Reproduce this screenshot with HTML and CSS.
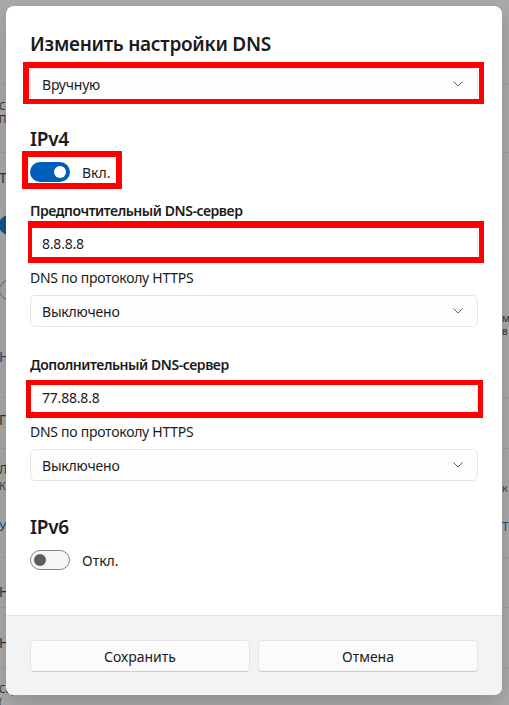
FILE: index.html
```html
<!DOCTYPE html>
<html lang="ru">
<head>
    <meta charset="UTF-8">
    <meta name="viewport" content="width=device-width, initial-scale=1.0">
    <title>Изменить настройки DNS</title>
    <link rel="stylesheet" href="styles.css">
</head>
<body>
    <!-- settings page behind the dialog (dimmed) -->
    <div class="backdrop">
        <div class="bg-row r0"></div>
        <div class="bg-row r1">
            <div class="bg-left">
                <div class="bg-line">Сеть</div>
                <div class="bg-line">Про</div>
            </div>
        </div>
        <div class="bg-row r2">
            <div class="bg-left">
                <div class="bg-text">Тип</div>
                <div class="bg-toggle on"></div>
                <div class="bg-toggle off"></div>
                <div class="bg-text link l2">Нас</div>
            </div>
            <div class="bg-right">
                <div class="bg-line">м</div>
                <div class="bg-line">в</div>
            </div>
        </div>
        <div class="bg-row r3">
            <div class="bg-left"><div class="bg-text">Гб</div></div>
        </div>
        <div class="bg-row r4">
            <div class="bg-left">
                <div class="bg-text">Лим</div>
                <div class="bg-text small">Ког</div>
                <div class="bg-text link l4">Уст</div>
            </div>
            <div class="bg-right">
                <div class="bg-text small">к</div>
                <div class="bg-text link l4r">Т</div>
            </div>
        </div>
        <div class="bg-row r5">
            <div class="bg-left"><div class="bg-text">Наз</div></div>
        </div>
        <div class="bg-row r6">
            <div class="bg-left"><div class="bg-text">Наз</div></div>
        </div>
        <div class="bg-row r7">
            <div class="bg-left">
                <div class="bg-line">Сер</div>
                <div class="bg-line">(</div>
            </div>
        </div>
    </div>

    <div class="dialog">
        <div class="dialog-body">
            <h1 class="dialog-title">Изменить настройки DNS</h1>

            <div class="mark mark-mode">
                <div class="select">
                    <span>Вручную</span>
                    <svg class="chevron" width="10" height="6" viewBox="0 0 10 6"><path d="M0.5 0.5 L5 5 L9.5 0.5" fill="none" stroke="#5f5f5f" stroke-width="1"/></svg>
                </div>
            </div>

            <h2 class="section-title">IPv4</h2>
            <div class="toggle-row">
                <div class="mark mark-toggle">
                    <div class="toggle on"><div class="knob"></div></div>
                    <span>Вкл.</span>
                </div>
            </div>

            <div class="field-label">Предпочтительный DNS-сервер</div>
            <div class="mark mark-dns1">
                <div class="input">8.8.8.8</div>
            </div>
            <div class="sub-label">DNS по протоколу HTTPS</div>
            <div class="select">
                <span>Выключено</span>
                <svg class="chevron" width="10" height="6" viewBox="0 0 10 6"><path d="M0.5 0.5 L5 5 L9.5 0.5" fill="none" stroke="#5f5f5f" stroke-width="1"/></svg>
            </div>

            <div class="field-label second">Дополнительный DNS-сервер</div>
            <div class="mark mark-dns2">
                <div class="input">77.88.8.8</div>
            </div>
            <div class="sub-label">DNS по протоколу HTTPS</div>
            <div class="select">
                <span>Выключено</span>
                <svg class="chevron" width="10" height="6" viewBox="0 0 10 6"><path d="M0.5 0.5 L5 5 L9.5 0.5" fill="none" stroke="#5f5f5f" stroke-width="1"/></svg>
            </div>

            <h2 class="section-title ipv6">IPv6</h2>
            <div class="toggle-row">
                <div class="switch">
                    <div class="toggle off"><div class="knob"></div></div>
                    <span>Откл.</span>
                </div>
            </div>
        </div>

        <div class="dialog-footer">
            <button type="button" class="btn">Сохранить</button>
            <button type="button" class="btn">Отмена</button>
        </div>
    </div>
</body>
</html>
```

FILE: styles.css
```css
* {
    box-sizing: border-box;
}

body {
    margin: 0;
    width: 509px;
    height: 705px;
    overflow: hidden;
    position: relative;
    font-family: "Noto Sans", sans-serif;
    background-color: #ababab;
    color: #1b1b1b;
}

/* ---------- dimmed page behind ---------- */

.backdrop {
    height: 705px;
    overflow: hidden;
    color: #333;
    font-size: 14px;
}

.bg-row {
    display: flex;
    border-bottom: 1px solid #a0a0a0;
}

.bg-left {
    flex: 1;
    margin-left: -1px;
    white-space: nowrap;
}

.bg-right {
    width: 7px;
    white-space: nowrap;
}

.bg-line {
    font-size: 10px;
    line-height: 13px;
}

.bg-text {
    line-height: 16px;
}

.small {
    font-size: 11px;
    color: #444;
}

.link {
    color: #1c4b7d;
}

.bg-toggle {
    width: 40px;
    height: 20px;
    border-radius: 10px;
}

.bg-toggle.on {
    margin-top: 29px;
    background-color: #15538e;
}

.bg-toggle.off {
    margin-top: 45px;
    border: 1px solid #6a6a6a;
}

.l2 { margin-top: 49px; }
.l4 { margin-top: 25px; }
.l4r { margin-top: 23px; }

.r0 { height: 84px; }
.r1 { height: 69px; padding-top: 16px; }
.r2 { height: 245px; padding-top: 17px; }
.r2 .bg-right { padding-top: 142px; line-height: 15px; }
.r3 { height: 51px; padding-top: 14px; }
.r4 { height: 109px; padding-top: 13px; font-size: 12px; }
.r4 .bg-right { padding-top: 18px; }
.r5 { height: 50px; padding-top: 26px; }
.r6 { height: 61px; padding-top: 27px; }
.r7 { flex: 1; padding-top: 14px; border-bottom: none; }

/* ---------- dialog ---------- */

.dialog {
    position: absolute;
    top: 6px;
    left: 6px;
    width: 496px;
    height: 689px;
    display: flex;
    flex-direction: column;
    background-color: #fff;
    border-radius: 8px;
    overflow: hidden;
    box-shadow: 0 8px 24px rgba(0, 0, 0, 0.18);
}

.dialog-body {
    flex: 1;
    padding: 24px 24px 0 24px;
}

.dialog-title {
    margin: 0 0 10px 0;
    font-size: 19px;
    line-height: 28px;
    font-weight: 600;
    letter-spacing: -0.25px;
}

.section-title {
    margin: 25px 0 9px 0;
    font-size: 19px;
    line-height: 28px;
    font-weight: 600;
    letter-spacing: -0.25px;
}

.section-title.ipv6 {
    margin-top: 32px;
}

.field-label {
    margin: 19px 0 6px 0;
    font-size: 14px;
    line-height: 20px;
    font-weight: 600;
    letter-spacing: -0.45px;
}

.field-label.second {
    margin-top: 28px;
}

.sub-label {
    margin: 9px 0 7px 0;
    font-size: 14px;
    line-height: 20px;
    letter-spacing: -0.27px;
}

.select,
.input {
    height: 32px;
    padding: 0 11px;
    display: flex;
    align-items: center;
    font-size: 14px;
    letter-spacing: -0.2px;
    background-color: #fdfdfd;
    border: 1px solid #e5e5e5;
    border-radius: 5px;
}

.select {
    justify-content: space-between;
    padding-right: 14px;
}

.input {
    background-color: #fff;
    border-bottom-color: #8a8a8a;
}

.chevron {
    display: block;
}

.toggle-row {
    display: flex;
    height: 20px;
    font-size: 14px;
}

.switch,
.mark-toggle {
    display: flex;
    align-items: center;
    gap: 12px;
}

.toggle {
    width: 40px;
    height: 20px;
    border-radius: 10px;
    display: flex;
    align-items: center;
    padding: 0 4px;
}

.toggle.on {
    background-color: #005fb8;
    justify-content: flex-end;
}

.toggle.off {
    border: 1px solid #858585;
    background-color: #f7f7f7;
    padding: 0 3px;
}

.knob {
    width: 12px;
    height: 12px;
    border-radius: 50%;
}

.toggle.on .knob {
    background-color: #fff;
}

.toggle.off .knob {
    background-color: #5d5d5d;
}

/* red annotation frames */

.mark {
    position: relative;
}

.mark::after {
    content: "";
    position: absolute;
    border: 5px solid #ff0000;
}

.mark-mode::after {
    top: -6px;
    right: -6px;
    bottom: -4px;
    left: -7px;
    border-width: 6px 5px 5px 6px;
}

.mark-toggle::after {
    top: -11px;
    right: -11px;
    bottom: -7px;
    left: -8px;
    border-width: 6px;
}

.mark-dns1::after {
    top: -6px;
    right: -6px;
    bottom: -4px;
    left: -2px;
    border-width: 7px 5px 6px 4px;
}

.mark-dns2::after {
    top: -1px;
    right: -5px;
    bottom: -5px;
    left: -4px;
    border-width: 5px 5px 6px 5px;
}

/* ---------- footer ---------- */

.dialog-footer {
    height: 80px;
    padding: 24px 24px 0 24px;
    display: flex;
    gap: 8px;
    background-color: #f3f3f3;
    border-top: 1px solid #e5e5e5;
}

.btn {
    flex: 1;
    height: 32px;
    font-family: "Noto Sans", sans-serif;
    font-size: 14px;
    color: #1b1b1b;
    background-color: #fbfbfb;
    border: 1px solid #e5e5e5;
    border-bottom-color: #cccccc;
    border-radius: 4px;
}
```
